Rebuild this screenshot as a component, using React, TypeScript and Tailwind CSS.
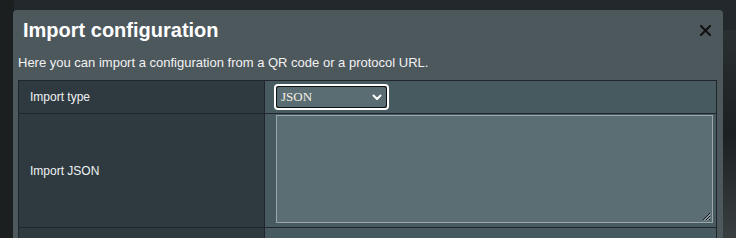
import React from "react";

export default function App() {
  return (
    <div className="w-[736px] h-[238px] overflow-hidden bg-[#22282b] relative" style={{ fontFamily: '"Liberation Sans", Arial, sans-serif' }}>
      <div className="absolute left-0 top-0 w-[14px] h-[238px] bg-[#1b1f20]" />
      <div className="absolute right-0 top-[30px] w-[14px] h-[208px] bg-gradient-to-b from-[#2a2f31] via-[#1c2022] to-[#3a3f41]" />
      <div className="absolute left-[13px] top-[10px] w-[710px] h-[240px] bg-[#4d585d] rounded-t-[4px]">
        <div className="flex items-start justify-between pl-[10px] pr-[12px] pt-[8px]">
          <h1 className="text-[20px] leading-[24px] font-bold text-white">Import configuration</h1>
          <svg width="11" height="11" viewBox="0 0 11 11" className="mt-[7px]">
            <path d="M1 1 L10 10 M10 1 L1 10" stroke="#111" strokeWidth="2" strokeLinecap="square" />
          </svg>
        </div>
        <p className="mt-[13px] pl-[5px] text-[13px] leading-[16px] text-[#f2f2f2]">
          Here you can import a configuration from a QR code or a protocol URL.
        </p>
        <div className="ml-[5px] mt-[9px] w-[699px] border border-[#1f2528] bg-[#1f2528] grid grid-cols-[245px_1fr] gap-px">
          <div className="h-[32px] bg-[#2f3a40] flex items-center pl-[11px] text-[12px] text-[#eef2f3]">Import type</div>
          <div className="h-[32px] bg-[#475a60] flex items-center pl-[9px]">
            <div className="w-[115px] h-[26px] rounded-[4px] border-2 border-white bg-[#0f1315] p-px">
              <div className="w-full h-full rounded-[2px] bg-[#5a6d73] flex items-center justify-between pl-[4px] pr-[4px]">
                <span className="text-[13px] text-[#f4f0e6]" style={{ fontFamily: '"Liberation Serif", "Times New Roman", serif' }}>JSON</span>
                <svg width="10" height="7" viewBox="0 0 10 7">
                  <path d="M1.5 1.5 L5 5 L8.5 1.5" stroke="#fff" strokeWidth="2" fill="none" strokeLinecap="round" strokeLinejoin="round" />
                </svg>
              </div>
            </div>
          </div>
          <div className="h-[113px] bg-[#2f3a40] flex items-center pl-[11px] text-[12px] text-[#eef2f3]">Import JSON</div>
          <div className="h-[113px] bg-[#475a60] pl-[11px] pr-[3px] pt-[1px]">
            <div className="relative w-full h-[108px] border border-[#9ca7aa] bg-[#5b6e74]">
              <svg width="9" height="9" viewBox="0 0 9 9" className="absolute right-[1px] bottom-[1px]">
                <path d="M8 1 L1 8 M8 4 L4 8 M8 7 L7 8" stroke="#1a1a1a" strokeWidth="1" />
                <path d="M8.5 2 L2 8.5 M8.5 5 L5 8.5" stroke="#cfd4d6" strokeWidth="0.8" />
              </svg>
            </div>
          </div>
          <div className="h-[30px] bg-[#2f3a40]" />
          <div className="h-[30px] bg-[#475a60]" />
        </div>
      </div>
    </div>
  );
}
